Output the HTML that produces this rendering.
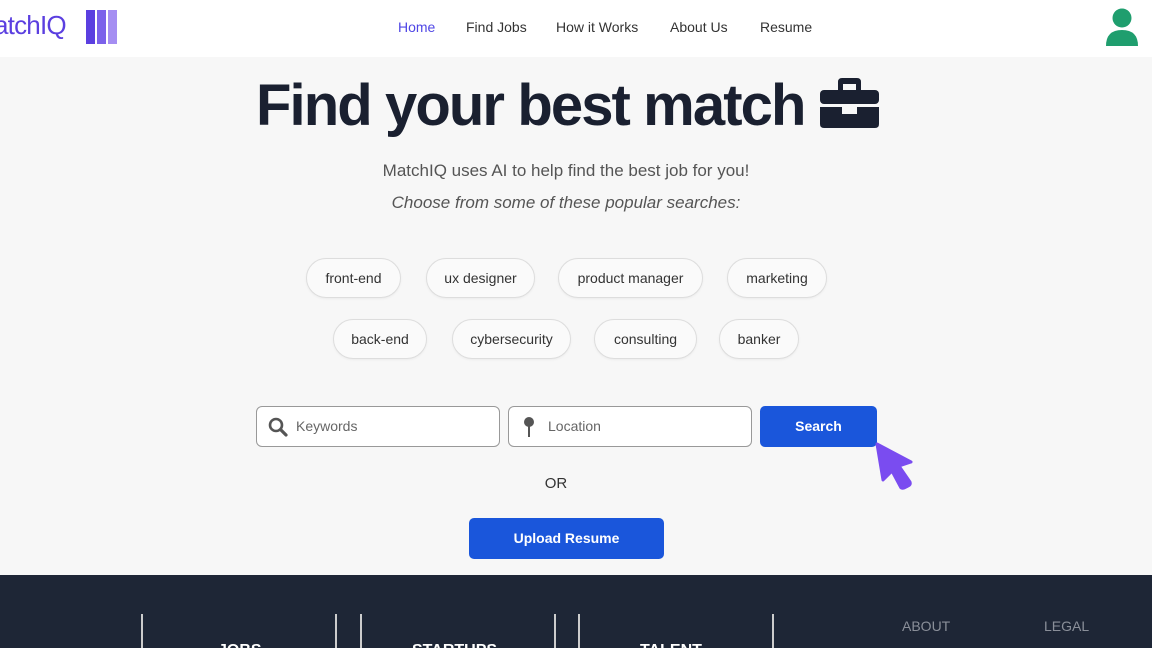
<!DOCTYPE html>
<html><head><meta charset="utf-8"><style>
*{margin:0;padding:0;box-sizing:border-box}
html,body{width:1152px;height:648px;overflow:hidden}
body{background:#f7f7f7;font-family:"Liberation Sans",sans-serif;position:relative;color:#222}
.nav{position:absolute;top:0;left:0;width:1152px;height:57px;background:#fff}
.logo{position:absolute;left:-6px;top:10px;font-size:26px;color:#5b3fe0;letter-spacing:-0.8px}
.bars{position:absolute;left:86px;top:10px}
.bars span{position:absolute;top:0;width:9px;height:34px}
.links a{position:absolute;top:19px;font-size:14px;color:#333;text-decoration:none}
h1{position:absolute;left:256px;top:72px;font-size:58px;font-weight:bold;letter-spacing:-1.9px;color:#1a2030;white-space:nowrap}
.sub{position:absolute;width:1152px;text-align:center;font-size:17px;color:#555}
.chip{position:absolute;height:40px;border:1px solid #ddd;border-radius:20px;background:#fafafa;font-size:14px;color:#333;text-align:center;line-height:38px;box-shadow:0 1px 2px rgba(0,0,0,.05)}
.inp{position:absolute;top:406px;height:41px;border:1px solid #999;border-radius:6px;background:#fff;font-size:14px;color:#666;line-height:39px}
.btn{position:absolute;background:#1a56db;color:#fff;font-weight:bold;font-size:14px;text-align:center;border-radius:5px}
.foot{position:absolute;left:0;top:575px;width:1152px;height:73px;background:#1e2636;overflow:hidden}
.vl{position:absolute;top:39px;width:2px;height:40px;background:#ccc}
.ft{position:absolute;top:43px;font-size:14px;color:#8a8f99}
.fb{position:absolute;top:67px;font-size:16px;font-weight:bold;color:#fff}
</style></head><body>
<div class="nav">
 <div class="logo">atchIQ</div>
 <div class="bars"><span style="left:0;background:#5b3fe0"></span><span style="left:11px;background:#7b61ea"></span><span style="left:22px;background:#a58ef2"></span></div>
 <div class="links">
  <a style="left:398px;color:#4f46e5">Home</a>
  <a style="left:466px">Find Jobs</a>
  <a style="left:556px">How it Works</a>
  <a style="left:670px">About Us</a>
  <a style="left:760px">Resume</a>
 </div>
 <svg style="position:absolute;left:1104px;top:8px" width="36" height="40" viewBox="0 0 36 40"><circle cx="18" cy="10" r="9.5" fill="#1f9e6e"/><path d="M2 38 Q2 22 18 22 Q34 22 34 38 Z" fill="#1f9e6e"/></svg>
</div>
<h1>Find your best match</h1>
<svg style="position:absolute;left:820px;top:77px" width="59" height="52" viewBox="0 0 59 52"><path d="M18 13 V5 Q18 1 22 1 H37 Q41 1 41 5 V13 H36 V7 H23 V13 Z" fill="#1a2030"/><rect x="0" y="13" width="59" height="14" rx="4" fill="#1a2030"/><path d="M0 30 H22 V37 H37 V30 H59 V47 Q59 51 55 51 H4 Q0 51 0 47 Z" fill="#1a2030"/></svg>
<div class="sub" style="top:161px;left:-10px">MatchIQ uses AI to help find the best job for you!</div>
<div class="sub" style="top:193px;left:-10px;font-style:italic;color:#555">Choose from some of these popular searches:</div>
<div class="chip" style="left:306px;top:258px;width:95px">front-end</div>
<div class="chip" style="left:426px;top:258px;width:109px">ux designer</div>
<div class="chip" style="left:558px;top:258px;width:145px">product manager</div>
<div class="chip" style="left:727px;top:258px;width:100px">marketing</div>
<div class="chip" style="left:333px;top:319px;width:94px">back-end</div>
<div class="chip" style="left:452px;top:319px;width:119px">cybersecurity</div>
<div class="chip" style="left:594px;top:319px;width:103px">consulting</div>
<div class="chip" style="left:719px;top:319px;width:80px">banker</div>
<div class="inp" style="left:256px;width:244px;padding-left:39px">Keywords
 <svg style="position:absolute;left:11px;top:10px" width="20" height="20" viewBox="0 0 20 20"><circle cx="8" cy="8" r="6" fill="none" stroke="#555" stroke-width="2.6"/><path d="M12.5 12.5 L18 18" stroke="#555" stroke-width="3.2" stroke-linecap="round"/></svg></div>
<div class="inp" style="left:508px;width:244px;padding-left:39px">Location
 <svg style="position:absolute;left:14px;top:9px" width="12" height="22" viewBox="0 0 12 22"><circle cx="6" cy="6" r="5" fill="#555"/><rect x="5" y="10" width="2" height="11" fill="#555"/></svg></div>
<div class="btn" style="left:760px;top:406px;width:117px;height:41px;line-height:41px">Search</div>
<svg style="position:absolute;left:873px;top:440px" width="42" height="52" viewBox="0 0 42 52"><path d="M4 4 L38 22 L26 26 L37 42 Q38 45 35 46 L31 48 Q28 49 27 46 L19 31 L10 40 Z" fill="#7a4cf0" stroke="#7a4cf0" stroke-width="3" stroke-linejoin="round"/></svg>
<div class="sub" style="top:475px;left:-20px;font-size:15px;color:#333">OR</div>
<div class="btn" style="left:469px;top:518px;width:195px;height:41px;line-height:41px">Upload Resume</div>
<div class="foot">
 <div class="vl" style="left:141px"></div><div class="vl" style="left:335px"></div>
 <div class="vl" style="left:360px"></div><div class="vl" style="left:554px"></div>
 <div class="vl" style="left:578px"></div><div class="vl" style="left:772px"></div>
 <div class="ft" style="left:902px">ABOUT</div>
 <div class="ft" style="left:1044px">LEGAL</div>
 <div class="fb" style="left:218px">JOBS</div>
 <div class="fb" style="left:412px">STARTUPS</div>
 <div class="fb" style="left:640px">TALENT</div>
</div>
</body></html>
